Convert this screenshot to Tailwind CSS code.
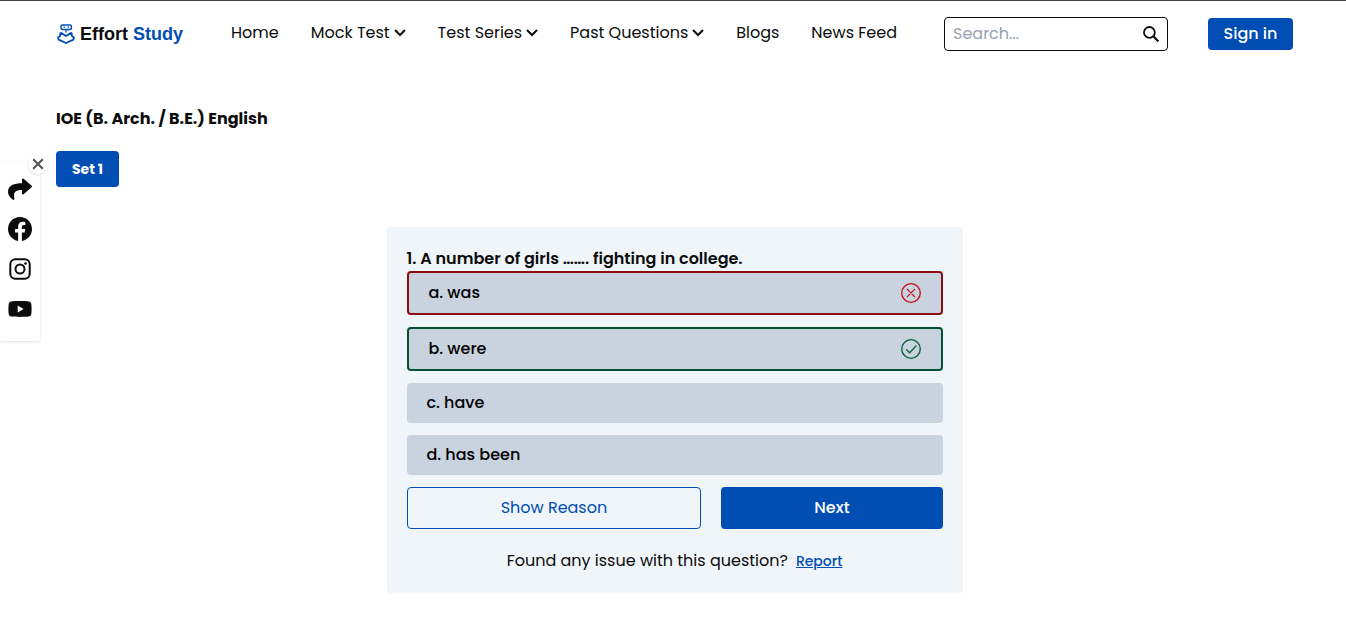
<!DOCTYPE html>
<html lang="en">
<head>
  <meta charset="UTF-8" />
  <meta name="viewport" content="width=device-width, initial-scale=1.0"/>
  <title>IOE (B. Arch. / B.E.) English - Effort Study</title>
  <script src="https://cdn.jsdelivr.net/npm/@tailwindcss/browser@4"></script>
</head>
<body class="min-h-screen bg-white font-[Poppins,Inter,sans-serif] text-base text-[#0c0c0c]">

  <!-- Header -->
  <header class="flex items-center border-t border-[#444] pt-4 pb-4 pl-14 pr-[53px]">
    <a href="#" class="mr-12 flex items-center gap-1 font-['Liberation_Sans',sans-serif] text-lg leading-6 font-bold">
      <svg class="h-5 w-5 text-[#004db3]" viewBox="0 0 20 20" fill="none" stroke="currentColor" stroke-width="1.8" stroke-linejoin="round">
        <rect x="5" y="1" width="10.400" height="4.400" rx="1.500" stroke-width="1.500"/>
        <path d="M7.500 3.200h1.400M11.500 3.200h1.400M10 5.500v3" stroke-width="1.200"/>
        <path d="M10 12 5.200 9 4.400 9.200 4 12.200 2 13.200 2.600 15.600 10 19l7.400-3.400.6-2.400-2-1-.4-3-.8-.2z"/>
      </svg>
      <span>Effort <span class="text-[#004db3]">Study</span></span>
    </a>

    <nav class="mr-[47px] flex flex-1 items-center justify-between pb-0.5 whitespace-nowrap">
      <a href="#">Home</a>
      <a href="#" class="flex items-center gap-1">Mock Test
        <svg class="h-3 w-3" viewBox="0 0 12 12" fill="none" stroke="currentColor" stroke-width="2"><path d="M1 3l5 5 5-5"/></svg>
      </a>
      <a href="#" class="flex items-center gap-1">Test Series
        <svg class="h-3 w-3" viewBox="0 0 12 12" fill="none" stroke="currentColor" stroke-width="2"><path d="M1 3l5 5 5-5"/></svg>
      </a>
      <a href="#" class="flex items-center gap-1">Past Questions
        <svg class="h-3 w-3" viewBox="0 0 12 12" fill="none" stroke="currentColor" stroke-width="2"><path d="M1 3l5 5 5-5"/></svg>
      </a>
      <a href="#">Blogs</a>
      <a href="#">News Feed</a>
    </nav>

    <form class="mr-10 flex h-[34px] w-56 items-center rounded border border-[#0c0c0c] px-2">
      <input type="text" aria-label="Search" placeholder="Search..." class="min-w-0 flex-1 outline-none placeholder:text-gray-400" />
      <button type="button" aria-label="Submit search">
        <svg class="h-4 w-4" viewBox="0 0 16 16" fill="none" stroke="currentColor" stroke-width="1.8"><circle cx="6.4" cy="6.4" r="5.4"/><path d="M10.3 10.3 15.4 15.4" stroke-width="2.2"/></svg>
      </button>
    </form>
    <button type="button" class="h-8 w-[85px] rounded bg-[#004db3] font-medium text-white">Sign in</button>
  </header>

  <!-- Share bar -->
  <aside class="fixed top-[161px] left-0 flex flex-col gap-4 bg-white px-2 pt-4 pb-5 shadow">
    <button type="button" aria-label="Close" class="absolute -top-[7px] left-7 flex h-5 w-5 items-center justify-center rounded-full bg-white shadow-sm">
      <svg class="h-3 w-3 text-[#555]" viewBox="0 0 12 12" fill="none" stroke="currentColor" stroke-width="2.2"><path d="M1.200 1.200l9.600 9.600M10.800 1.200l-9.600 9.600"/></svg>
    </button>
    <a href="#" aria-label="Share">
      <svg class="h-6 w-6" viewBox="0 0 24 24" fill="currentColor"><path d="M14 2.600c0-.9 1-1.300 1.600-.8l8 7c.5.400.5 1 0 1.400l-8 7c-.6.500-1.600.1-1.600-.8v-3.500C7.400 13 5 14.800 6.400 21.900c.2.800-.7 1.300-1.300.8C2.200 20.700 0 18.100 0 14.900 0 8 6.200 6.300 14 6.200z"/></svg>
    </a>
    <a href="#" aria-label="Facebook">
      <svg class="h-6 w-6" viewBox="0 0 24 24" fill="currentColor"><path d="M24 12.070C24 5.400 18.630 0 12 0S0 5.400 0 12.070C0 18.100 4.390 23.090 10.130 24v-8.440H7.080v-3.490h3.050V9.410c0-3.020 1.790-4.690 4.530-4.690 1.310 0 2.680.24 2.680.24v2.970h-1.510c-1.490 0-1.960.93-1.960 1.890v2.250h3.330l-.53 3.490h-2.800V24C19.610 23.090 24 18.100 24 12.070z"/></svg>
    </a>
    <a href="#" aria-label="Instagram">
      <svg class="h-6 w-6" viewBox="0 0 24 24" fill="none" stroke="currentColor" stroke-width="2"><rect x="2.300" y="2.300" width="19.400" height="19.400" rx="5"/><circle cx="12" cy="12" r="4.500"/><circle cx="17.500" cy="6.500" r="1.300" fill="currentColor" stroke="none"/></svg>
    </a>
    <a href="#" aria-label="YouTube">
      <svg class="h-6 w-6" viewBox="0 0 24 24" fill="currentColor"><path fill-rule="evenodd" d="M12 4c3 0 6.500.1 8.700.4 1.500.2 2.400 1.100 2.600 2.600.4 3 .4 7 0 10-.2 1.500-1.100 2.400-2.600 2.600-4.500.5-12.900.5-17.400 0C1.800 19.400.9 18.500.7 17c-.4-3-.4-7 0-10 .2-1.500 1.100-2.400 2.600-2.600C5.500 4.100 9 4 12 4zM9.700 8.600v6.800l5.900-3.400z"/></svg>
    </a>
  </aside>

  <main class="pt-10 pl-14 pr-[53px]">
    <h1 class="font-bold">IOE (B. Arch. / B.E.) English</h1>
    <button type="button" class="mt-5 h-9 w-[63px] rounded bg-[#004db3] text-sm font-bold text-white">Set 1</button>

    <!-- Question card -->
    <section class="mx-auto mt-10 flex max-w-xl flex-col gap-3 rounded bg-[#eff5f9] p-5">
      <div>
        <h2 class="font-semibold">1. A number of girls ……. fighting in college.</h2>
        <button type="button" class="flex h-11 w-full items-center justify-between rounded border-2 border-[#8c0e10] bg-[#c8d3df] px-5 font-medium text-black">a. was
          <svg class="h-5 w-5 text-[#cc0a14]" viewBox="0 0 20 20" fill="none" stroke="currentColor" stroke-width="1.300" stroke-linecap="round"><circle cx="10" cy="10" r="9.300"/><path d="M6.400 6.400l7.200 7.200M13.600 6.400l-7.200 7.200"/></svg>
        </button>
      </div>
      <button type="button" class="flex h-11 items-center justify-between rounded border-2 border-[#005230] bg-[#c8d3df] px-5 font-medium text-black">b. were
        <svg class="h-5 w-5 text-[#005f37]" viewBox="0 0 20 20" fill="none" stroke="currentColor" stroke-width="1.300" stroke-linecap="round" stroke-linejoin="round"><circle cx="10" cy="10" r="9.300"/><path d="M5.500 10.600l3.100 3.100 6.400-6.700"/></svg>
      </button>
      <button type="button" class="flex h-10 items-center rounded bg-[#c8d3df] px-5 font-medium text-black">c. have</button>
      <button type="button" class="flex h-10 items-center rounded bg-[#c8d3df] px-5 font-medium text-black">d. has been</button>

      <div class="grid grid-cols-[4fr_3fr] gap-5">
        <button type="button" class="h-[42px] rounded border border-[#004db3] text-[#004db3]">Show Reason</button>
        <button type="button" class="h-[42px] rounded bg-[#004db3] font-medium text-white">Next</button>
      </div>

      <p class="mt-2 flex items-center justify-center gap-2">
        Found any issue with this question?
        <a href="#" class="text-sm font-medium text-[#004db3] underline">Report</a>
      </p>
    </section>
  </main>

</body>
</html>
